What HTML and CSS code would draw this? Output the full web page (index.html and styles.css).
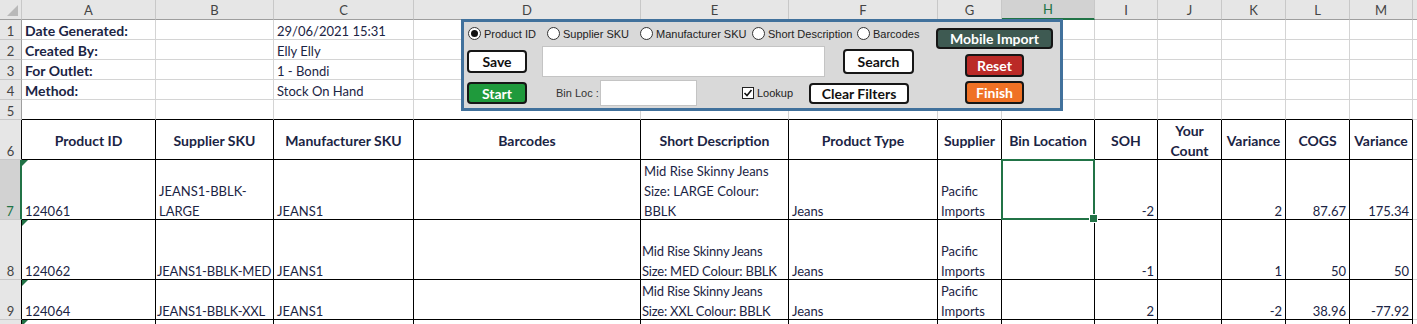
FILE: index.html
```html
<!DOCTYPE html>
<html lang="en">
<head>
    <meta charset="UTF-8">
    <meta name="viewport" content="width=device-width, initial-scale=1.0">
    <title>Stocktake - Stock On Hand</title>
    <link rel="stylesheet" href="styles.css">
</head>
<body>
    <div class="sheet">
        <!-- column letters -->
        <div class="ch corner"></div>
        <div class="ch">A</div>
        <div class="ch">B</div>
        <div class="ch">C</div>
        <div class="ch">D</div>
        <div class="ch">E</div>
        <div class="ch">F</div>
        <div class="ch">G</div>
        <div class="ch on">H</div>
        <div class="ch">I</div>
        <div class="ch">J</div>
        <div class="ch">K</div>
        <div class="ch">L</div>
        <div class="ch">M</div>
        <div class="ch"></div>

        <!-- row 1 -->
        <div class="rh">1</div>
        <div class="c b">Date Generated:</div>
        <div class="c"></div>
        <div class="c">29/06/2021 15:31</div>
        <div class="c"></div><div class="c"></div><div class="c"></div><div class="c"></div><div class="c"></div><div class="c"></div><div class="c"></div><div class="c"></div><div class="c"></div><div class="c"></div><div class="c"></div>

        <!-- row 2 -->
        <div class="rh">2</div>
        <div class="c b">Created By:</div>
        <div class="c"></div>
        <div class="c">Elly Elly</div>
        <div class="c"></div><div class="c"></div><div class="c"></div><div class="c"></div><div class="c"></div><div class="c"></div><div class="c"></div><div class="c"></div><div class="c"></div><div class="c"></div><div class="c"></div>

        <!-- row 3 -->
        <div class="rh">3</div>
        <div class="c b">For Outlet:</div>
        <div class="c"></div>
        <div class="c">1 - Bondi</div>
        <div class="c"></div><div class="c"></div><div class="c"></div><div class="c"></div><div class="c"></div><div class="c"></div><div class="c"></div><div class="c"></div><div class="c"></div><div class="c"></div><div class="c"></div>

        <!-- row 4 -->
        <div class="rh">4</div>
        <div class="c b">Method:</div>
        <div class="c"></div>
        <div class="c">Stock On Hand</div>
        <div class="c"></div><div class="c"></div><div class="c"></div><div class="c"></div><div class="c"></div><div class="c"></div><div class="c"></div><div class="c"></div><div class="c"></div><div class="c"></div><div class="c"></div>

        <!-- row 5 -->
        <div class="rh">5</div>
        <div class="c top"></div><div class="c top"></div><div class="c top"></div><div class="c top"></div><div class="c top"></div><div class="c top"></div><div class="c top"></div><div class="c top"></div><div class="c top"></div><div class="c top"></div><div class="c top"></div><div class="c top"></div><div class="c top"></div>
        <div class="c"></div>

        <!-- row 6: table header -->
        <div class="rh t">6</div>
        <div class="c t hd">Product ID</div>
        <div class="c t hd">Supplier SKU</div>
        <div class="c t hd">Manufacturer SKU</div>
        <div class="c t hd">Barcodes</div>
        <div class="c t hd">Short Description</div>
        <div class="c t hd">Product Type</div>
        <div class="c t hd">Supplier</div>
        <div class="c t hd">Bin Location</div>
        <div class="c t hd">SOH</div>
        <div class="c t hd"><span>Your<br>Count</span></div>
        <div class="c t hd">Variance</div>
        <div class="c t hd">COGS</div>
        <div class="c t hd">Variance</div>
        <div class="c"></div>

        <!-- row 7 -->
        <div class="rh t on">7</div>
        <div class="c t flag">124061</div>
        <div class="c t"><span>JEANS1-BBLK-<br>LARGE</span></div>
        <div class="c t">JEANS1</div>
        <div class="c t"></div>
        <div class="c t"><span>Mid Rise Skinny Jeans<br>Size: LARGE Colour:<br>BBLK</span></div>
        <div class="c t">Jeans</div>
        <div class="c t"><span>Pacific<br>Imports</span></div>
        <div class="c t sel"></div>
        <div class="c t num">-2</div>
        <div class="c t"></div>
        <div class="c t num">2</div>
        <div class="c t num">87.67</div>
        <div class="c t num">175.34</div>
        <div class="c"></div>

        <!-- row 8 -->
        <div class="rh t">8</div>
        <div class="c t flag">124062</div>
        <div class="c t fit">JEANS1-BBLK-MED</div>
        <div class="c t">JEANS1</div>
        <div class="c t"></div>
        <div class="c t fit"><span>Mid Rise Skinny Jeans<br>Size: MED Colour: BBLK</span></div>
        <div class="c t">Jeans</div>
        <div class="c t"><span>Pacific<br>Imports</span></div>
        <div class="c t"></div>
        <div class="c t num">-1</div>
        <div class="c t"></div>
        <div class="c t num">1</div>
        <div class="c t num">50</div>
        <div class="c t num">50</div>
        <div class="c"></div>

        <!-- row 9 -->
        <div class="rh t">9</div>
        <div class="c t flag">124064</div>
        <div class="c t fit">JEANS1-BBLK-XXL</div>
        <div class="c t">JEANS1</div>
        <div class="c t"></div>
        <div class="c t fit"><span>Mid Rise Skinny Jeans<br>Size: XXL Colour: BBLK</span></div>
        <div class="c t">Jeans</div>
        <div class="c t"><span>Pacific<br>Imports</span></div>
        <div class="c t"></div>
        <div class="c t num">2</div>
        <div class="c t"></div>
        <div class="c t num">-2</div>
        <div class="c t num">38.96</div>
        <div class="c t num">-77.92</div>
        <div class="c"></div>

        <!-- row 10 (only its top edge is on screen) -->
        <div class="rh t"></div>
        <div class="c t flag"></div>
        <div class="c t"></div><div class="c t"></div><div class="c t"></div><div class="c t"></div><div class="c t"></div><div class="c t"></div><div class="c t"></div><div class="c t"></div><div class="c t"></div><div class="c t"></div><div class="c t"></div><div class="c t"></div>
        <div class="c"></div>

        <!-- form controls sitting on the sheet -->
        <div class="panel">
            <div class="search-area">
                <div class="radios">
                    <label class="opt"><span class="radio on"></span>Product ID</label>
                    <label class="opt"><span class="radio"></span>Supplier SKU</label>
                    <label class="opt"><span class="radio"></span>Manufacturer SKU</label>
                    <label class="opt"><span class="radio"></span>Short Description</label>
                    <label class="opt"><span class="radio"></span>Barcodes</label>
                </div>
                <div class="row2">
                    <button class="btn save">Save</button>
                    <input type="text" class="field search-field">
                    <button class="btn search">Search</button>
                </div>
                <div class="row3">
                    <button class="btn green start">Start</button>
                    <span class="bin-label">Bin Loc :</span>
                    <input type="text" class="field bin-field">
                    <span class="check">
                        <svg width="12" height="12" viewBox="0 0 12 12">
                            <rect x="0.5" y="0.5" width="11" height="11" fill="#fff" stroke="#222"/>
                            <path d="M2.5 6 L5 8.5 L9.5 3" fill="none" stroke="#111" stroke-width="1.6"/>
                        </svg>
                    </span>
                    <span class="lookup">Lookup</span>
                    <button class="btn clear">Clear Filters</button>
                </div>
            </div>
            <div class="actions">
                <button class="btn slate mobile">Mobile Import</button>
                <button class="btn red reset">Reset</button>
                <button class="btn orange finish">Finish</button>
            </div>
        </div>
    </div>
</body>
</html>
```

FILE: styles.css
```css
* {
    box-sizing: border-box;
}
body {
    margin: 0;
    font-family: Lato, "Liberation Sans", sans-serif;
    font-size: 13px;
    color: #1b2444;
    background-color: #fff;
    overflow: hidden;
}
.sheet {
    position: relative;
    display: grid;
    grid-template-columns: 22px 134px 118px 140px 227px 148px 149px 64px 93px 63px 64px 64px 64px 63px 1fr;
    grid-template-rows: 20px 20px 20px 20px 20px 20px 40px 60px 60px 40px 20px;
}

/* headers */
.ch {
    display: flex;
    align-items: center;
    justify-content: center;
    background-color: #e6e6e6;
    border-right: 1px solid #c8c8c8;
    border-bottom: 1px solid #9e9e9e;
    color: #444;
}
.ch.on {
    background-color: #d2d2d2;
    color: #217346;
    border-bottom: 2px solid #217346;
}
.corner {
    position: relative;
}
.corner::after {
    content: "";
    position: absolute;
    right: 3px;
    bottom: 3px;
    border-left: 11px solid transparent;
    border-bottom: 11px solid #b9b9b9;
}
.rh {
    display: flex;
    align-items: flex-end;
    justify-content: center;
    line-height: 16px;
    background-color: #e6e6e6;
    border-right: 1px solid #9e9e9e;
    border-bottom: 1px solid #c8c8c8;
    color: #444;
}
.rh.t {
    border-right-color: #000;
}
.rh.on {
    background-color: #d2d2d2;
    color: #217346;
    border-right: 2px solid #217346;
}

/* cells */
.c {
    display: flex;
    align-items: flex-end;
    padding: 0 3px;
    line-height: 16px;
    white-space: nowrap;
    overflow: hidden;
    border-right: 1px solid #d4d4d4;
    border-bottom: 1px solid #d4d4d4;
}
.c > span {
    line-height: 20px;
    margin-bottom: -2px;
}
.c.b {
    font-size: 14px;
    font-weight: bold;
}
.c.top {
    border-bottom-color: #000;
}
.c.t {
    border-right-color: #000;
    border-bottom-color: #000;
}
.c.hd {
    align-items: center;
    justify-content: center;
    padding-top: 2px;
    text-align: center;
    font-size: 14px;
    font-weight: bold;
}
.c.hd > span {
    margin-bottom: 0;
}
.c.num {
    justify-content: flex-end;
}
.c.fit {
    padding: 0 1px;
    letter-spacing: -0.2px;
}
.c.flag {
    position: relative;
}
.c.flag::before {
    content: "";
    position: absolute;
    left: 0;
    top: 0;
    border-top: 6px solid #217346;
    border-right: 6px solid transparent;
}
.c.sel {
    position: relative;
    overflow: visible;
}
.c.sel::after {
    content: "";
    position: absolute;
    top: -1px;
    left: -1px;
    right: -1px;
    bottom: -1px;
    border: 2px solid #217346;
}
.c.sel::before {
    content: "";
    position: absolute;
    right: -4px;
    bottom: -4px;
    width: 7px;
    height: 7px;
    background-color: #217346;
    border: 1px solid #fff;
    z-index: 1;
}

/* control panel */
.panel {
    position: absolute;
    left: 461px;
    top: 19px;
    width: 602px;
    height: 92px;
    display: flex;
    background-color: #d9d9d9;
    border: 3px solid #41719c;
    font-family: "Liberation Sans", Arial, sans-serif;
    font-size: 11px;
    color: #222;
    z-index: 2;
}
.search-area {
    width: 461px;
}
.radios {
    display: grid;
    grid-template-columns: 79px 93px 112px 105px auto;
    align-items: center;
    height: 23px;
    padding-left: 4px;
}
.opt {
    display: flex;
    align-items: center;
    gap: 3px;
}
.radio {
    position: relative;
    width: 13px;
    height: 13px;
    border: 1px solid #333;
    border-radius: 50%;
    background-color: #fff;
}
.radio.on::after {
    content: "";
    position: absolute;
    left: 2px;
    top: 2px;
    width: 7px;
    height: 7px;
    border-radius: 50%;
    background-color: #111;
}
.row2 {
    display: flex;
    align-items: center;
    height: 33px;
    padding-left: 3px;
}
.row3 {
    display: flex;
    align-items: center;
    height: 30px;
    padding-left: 3px;
}
.field {
    margin: 0;
    padding: 0 3px;
    background-color: #fff;
    border: 1px solid #c4c4c4;
    font-family: inherit;
    font-size: 11px;
}
.search-field {
    width: 283px;
    height: 31px;
    margin-left: 15px;
}
.bin-label {
    width: 44px;
    margin-left: 29px;
    color: #333;
}
.bin-field {
    width: 97px;
    height: 26px;
}
.check {
    display: flex;
    margin-left: 45px;
}
.lookup {
    width: 55px;
    padding-left: 3px;
}

/* buttons */
.btn {
    display: flex;
    align-items: center;
    justify-content: center;
    padding: 0;
    background-color: #fff;
    border: 2px solid #161616;
    border-radius: 4px;
    color: #111;
    font-family: Lato, "Liberation Sans", sans-serif;
    font-size: 14px;
    font-weight: bold;
}
.btn.green {
    background-color: #1f9a3c;
    color: #fff;
}
.btn.slate {
    background-color: #3e5a52;
    color: #fff;
}
.btn.red {
    background-color: #bb2a27;
    color: #fff;
}
.btn.orange {
    background-color: #ef7125;
    color: #fff;
}
.save,
.start {
    width: 60px;
}
.save {
    height: 23px;
}
.start {
    height: 22px;
}
.search {
    width: 71px;
    height: 25px;
    margin-left: 18px;
}
.clear {
    width: 100px;
    height: 21px;
}
.actions {
    display: flex;
    flex-direction: column;
    align-items: center;
    flex: 1;
    padding: 6px 0 0 4px;
}
.mobile {
    width: 117px;
    height: 21px;
}
.reset,
.finish {
    width: 59px;
    height: 23px;
}
.reset {
    margin-top: 5px;
}
.finish {
    margin-top: 4px;
}
```
